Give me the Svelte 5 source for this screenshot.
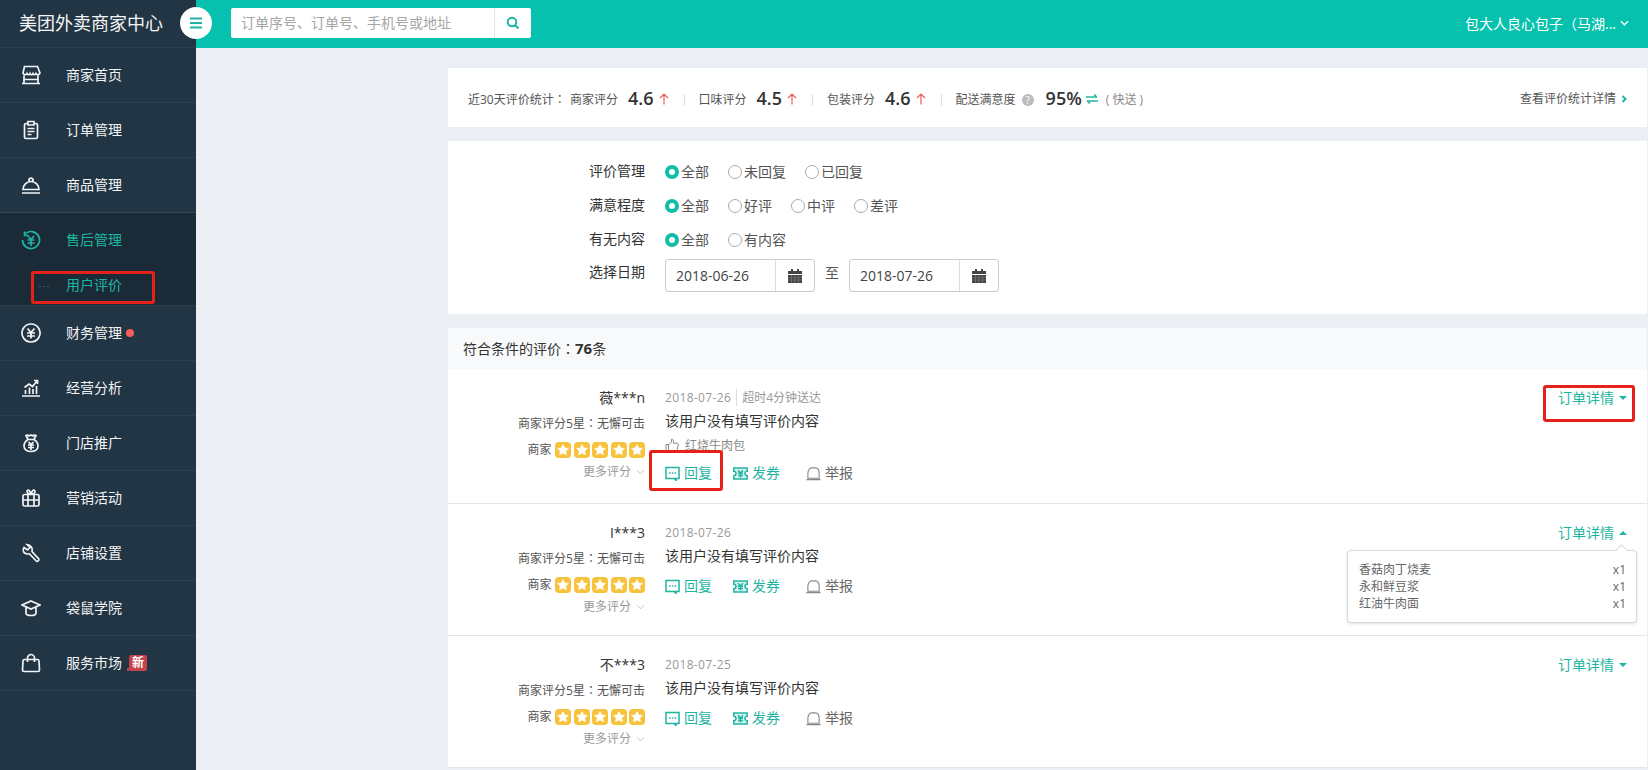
<script>
  const yen = 'M6.500 5.500L10 9.500L13.500 5.500M6 10h8M6 13h8M10 9.500V15.500';
  const nav = [
    { t: '商家首页', d: 'M3.500 1.500h13l2.500 6.500c-.6 2-3.300 2-4 .6c-.6 1.400-2.400 1.400-3 0c-.6 1.400-2.400 1.400-3 0c-.6 1.400-2.400 1.400-3 0c-.7 1.400-3.400 1.400-4-.6zM3 10.500V18M17 10.500V18M1 18.500h18M3 14.500h14' },
    { t: '订单管理', d: 'M7 3.500H5a1.500 1.500 0 0 0-1.500 1.500v12a1.500 1.500 0 0 0 1.500 1.500h10a1.500 1.500 0 0 0 1.500-1.500V5A1.500 1.500 0 0 0 15 3.500h-2M7 1.500h6v3.500H7zM6.500 8.500h7M6.500 11.500h7M6.500 14.500h4' },
    { t: '商品管理', d: 'M2 14.500a8 8 0 0 1 16 0zM8.500 6.500a2 2 0 1 1 3 0M1 18h18' },
    { t: '售后管理', active: true, sub: '用户评价', d: 'M3.500 1.500V5.500h4M4 4A8.500 8.500 0 1 1 1.500 10M7 6L10 9.500L13 6M6.500 10h7M6.500 13h7M10 9.500V16' },
    { t: '财务管理', dot: true, d: 'M10 1a9 9 0 1 0 .01 0zM' + yen.slice(1) },
    { t: '经营分析', d: 'M1 18h18M4.500 16v-4M8.500 16V9.500M12 16v-5M15.500 16V8M3.500 9.500L8 6l3.500 2.500L16 3M13 2.500h3.500V6' },
    { t: '门店推广', d: 'M7 6.500L5 2.500c1.500-1 2.500 0 3 .5c1-1.200 3-1.200 4 0c.5-.5 1.500-1.500 3-.5l-2 4c2.500 1.500 4 4 4 6.500c0 3.500-3 5.500-7 5.500s-7-2-7-5.500c0-2.500 1.500-5 4-6.500zM7 6.500h6M7.500 9L10 11.500L12.500 9M7 12h6M7 14.500h6M10 11.500V17' },
    { t: '营销活动', d: 'M3.500 6.500h13a1.500 1.500 0 0 1 1.500 1.500v8.500a1.500 1.500 0 0 1-1.500 1.500h-13A1.500 1.500 0 0 1 2 16.500V8a1.500 1.500 0 0 1 1.500-1.500zM2 12h16M7 6.500V18M13 6.500V18M10 6.500C8 6 5.500 5 6 3c.5-1.500 3-1.500 4 3.500c1-5 3.500-5 4-3.500c.5 2-2 3-4 3.500z' },
    { t: '店铺设置', d: 'M6 1.500L9 4.500L6.500 7L3 4.500C1 7 2.500 11 6.500 11c.8 0 1.200 0 1.800-.3l7 7.300c1 1 3.200-.5 2.500-2L11 8.500c1-3-1-7-5-7z' },
    { t: '袋鼠学院', d: 'M10 3L19 7L10 11L1 7zM5 9.500V15c0 1.500 2 2.500 5 2.500s5-1 5-2.500V9.500' },
    { t: '服务市场', badge: true, d: 'M3.500 6.500h13a1.500 1.500 0 0 1 1.500 1.500l.5 9a1.500 1.500 0 0 1-1.500 1.500H3A1.500 1.500 0 0 1 1.500 17L2 8a1.500 1.500 0 0 1 1.500-1.500zM6.500 9V5a3.500 3.500 0 0 1 7 0v4' }
  ];
  const stats = [
    { label: '商家评分', value: '4.6' },
    { label: '口味评分', value: '4.5' },
    { label: '包装评分', value: '4.6' }
  ];
  const filters = [
    { label: '评价管理', opts: ['全部', '未回复', '已回复'] },
    { label: '满意程度', opts: ['全部', '好评', '中评', '差评'] },
    { label: '有无内容', opts: ['全部', '有内容'] }
  ];
  const reviews = [
    { name: '薇***n', date: '2018-07-26', late: '超时4分钟送达', liked: '红烧牛肉包' },
    { name: 'I***3', date: '2018-07-26', open: true, items: ['香菇肉丁烧麦', '永和鲜豆浆', '红油牛肉面'] },
    { name: '不***3', date: '2018-07-25' }
  ];
</script>

<div class="page">
  <aside class="side">
    <div class="logo">美团外卖商家中心</div>
    {#each nav as n}
      <div class="nav" class:on={n.active}>
        <div class="nav-row">
          <svg class="nav-ico" viewBox="0 0 20 20" width="20" height="20"><path d={n.d} /></svg>
          <span class="nav-text">{n.t}</span>
          {#if n.dot}<i class="dot"></i>{/if}
          {#if n.badge}<span class="new">新</span>{/if}
        </div>
        {#if n.sub}
          <div class="sub"><span class="dash">---</span><span>{n.sub}</span></div>
        {/if}
      </div>
    {/each}
  </aside>

  <div class="right">
    <header class="top">
      <button class="burger" aria-label="menu">
        <svg viewBox="0 0 14 12" width="14" height="12"><path d="M1 1.500h12M1 6h12M1 10.500h12" /></svg>
      </button>
      <div class="search">
        <span class="ph">订单序号、订单号、手机号或地址</span>
        <span class="sbtn">
          <svg viewBox="0 0 14 14" width="14" height="14"><circle cx="6" cy="6" r="4.300" /><path d="M9.200 9.200L12.500 12.500" /></svg>
        </span>
      </div>
      <div class="user">
        <span>包大人良心包子<span class="cp">（</span>马湖...</span>
        <svg viewBox="0 0 10 6" width="9" height="6"><path d="M1 1l4 4l4-4" /></svg>
      </div>
    </header>

    <main class="main">
      <section class="stats">
        <span class="st-title">近30天评价统计<span class="cp">：</span></span>
        {#each stats as s}
          <span class="st-label">{s.label}</span>
          <b class="st-val">{s.value}</b>
          <svg class="up" viewBox="0 0 10 12" width="10" height="12"><path d="M5 11.500V1M1 5l4-4l4 4" /></svg>
          <i class="st-div"></i>
        {/each}
        <span class="st-label">配送满意度</span>
        <span class="help">?</span>
        <b class="st-val pct">95%</b>
        <svg class="swap" viewBox="0 0 12 10" width="12" height="10"><path d="M0 3h11M8 .5L11 3M12 7H1M4 9.500L1 7" /></svg>
        <span class="fast">( 快送 )</span>
        <span class="st-link">查看评价统计详情
          <svg viewBox="0 0 6 8" width="6" height="8"><path d="M1.500 1l3 3l-3 3" /></svg>
        </span>
      </section>

      <section class="filter">
        {#each filters as f}
          <div class="f-row">
            <span class="f-label">{f.label}</span>
            <div class="opts">
              {#each f.opts as o, i}
                <span class="opt"><i class="radio" class:sel={i === 0}></i>{o}</span>
              {/each}
            </div>
          </div>
        {/each}
        <div class="f-row date-row">
          <span class="f-label">选择日期</span>
          {#each ['2018-06-26', '2018-07-26'] as d, i}
            {#if i === 1}<span class="to">至</span>{/if}
            <div class="date">
              <span class="date-v">{d}</span>
              <span class="date-b">
                <svg viewBox="0 0 14 14" width="14" height="14"><path class="cal" d="M3 0h2v2h4V0h2v2h3v3H0V2h3zM0 6h14v8H0z" /><path class="cal-g" d="M0 8.500h14M0 11h14M3.500 6v8M7 6v8M10.500 6v8" /></svg>
              </span>
            </div>
          {/each}
        </div>
      </section>

      <section class="list">
        <div class="list-h">符合条件的评价<span class="cp">：</span><b>76</b>条</div>
        {#each reviews as r, idx}
          <article class="review" class:first={idx === 0}>
            <div class="r-left">
              <div class="r-name">{r.name}</div>
              <div class="r-sub">商家评分5星<span class="cp">：</span>无懈可击</div>
              <div class="r-stars">
                <span>商家</span>
                {#each [1, 2, 3, 4, 5] as _}
                  <span class="star"><svg viewBox="0 0 16 16" width="16" height="16"><path d="M8 2.500l1.700 3.400l3.800.5l-2.800 2.600l.7 3.700L8 11l-3.400 1.700l.7-3.700L2.500 6.400l3.800-.5z" /></svg></span>
                {/each}
              </div>
              <div class="r-more">更多评分<svg viewBox="0 0 10 6" width="9" height="6"><path d="M1 1l4 4l4-4" /></svg></div>
            </div>
            <div class="r-main">
              <div class="r-date">{r.date}{#if r.late}<span class="late">超时4分钟送达</span>{/if}</div>
              <div class="r-text">该用户没有填写评价内容</div>
              {#if r.liked}
                <div class="r-like">
                  <svg viewBox="0 0 14 14" width="14" height="14"><path d="M1 6.500h2.500V13H1zM3.500 7L6.500 4V1.200c1.500-.4 2.300 1 1.800 4h4c.8 0 1.200.7 1 1.500l-1.300 5.300c-.2.700-.6 1-1.300 1H3.500" /></svg>
                  {r.liked}
                </div>
              {/if}
              <div class="r-acts">
                <span class="act teal">
                  <svg viewBox="0 0 15 15" width="15" height="15"><path d="M1 1.500h13v11H1zM11 12.500v2l-2-2M4 7h1.500M6.800 7h1.500M9.600 7h1.500" /></svg>回复
                </span>
                <span class="act teal">
                  <svg viewBox="0 0 15 15" width="15" height="15"><path class="tk" d="M.8 2h13.400v3.300a2.200 2.200 0 0 0 0 4.400V13H.8V9.700a2.200 2.200 0 0 0 0-4.400z" /><path d="M5 4.200L7.500 7L10 4.200M5 7.300h5M5 9.500h5M7.500 7V11.500" /></svg>发券
                </span>
                <span class="act gray">
                  <svg viewBox="0 0 16 16" width="15" height="15"><path d="M2 13V8c0-3.500 2-6 4-6h4c2.500 0 4 2.500 4 6v5zM.5 14.500h15" /></svg>举报
                </span>
              </div>
            </div>
            <div class="r-detail" class:open={r.open}>订单详情<i class="caret"></i></div>
            {#if r.items}
              <div class="pop">
                {#each r.items as it}
                  <div class="pop-row"><span>{it}</span><span>x1</span></div>
                {/each}
              </div>
            {/if}
          </article>
        {/each}
      </section>
    </main>
  </div>

  <i class="mark m1"></i>
  <i class="mark m2"></i>
  <i class="mark m3"></i>
</div>

<style>
  :global(html), :global(body) { margin: 0; height: 100%; overflow: hidden; }
  .page {
    position: relative;
    display: flex;
    width: 1648px;
    height: 770px;
    overflow: hidden;
    background: #ebeef3;
    font: 14px/20px "Open Sans", "Noto Sans CJK SC", sans-serif;
    color: #333;
  }
  svg { display: block; flex: none; fill: none; stroke: currentColor; }
  .cp { font-family: "Noto Sans CJK TC", sans-serif; }

  .side { width: 196px; flex: none; background: #223544; color: #f2f4f5; }
  .logo {
    padding-left: 19px;
    font-size: 18px;
    line-height: 47px;
    height: 47px;
  }
  .nav { border-top: 1px solid #2c3f4e; }
  .nav.on { background: #1a2a37; color: #1fb5a2; border-top-color: #33485a; }
  .nav:last-child { border-bottom: 1px solid #2c3f4e; }
  .nav-row { display: flex; align-items: center; height: 54px; padding-left: 21px; }
  .nav-ico { stroke-width: 1.700; margin-right: 25px; }
  .dot { width: 8px; height: 8px; margin-left: 4px; border-radius: 50%; background: #f55d5f; }
  .new {
    position: relative;
    width: 18px;
    height: 16px;
    margin-left: 7px;
    border-radius: 2px;
    background: #c5444b;
    color: #fff;
    font-size: 12px;
    font-weight: 700;
    line-height: 16px;
    text-align: center;
  }
  .new::before {
    content: "";
    position: absolute;
    left: -2px;
    bottom: 0;
    border: 2px solid transparent;
    border-right-color: #c5444b;
    border-bottom-color: #c5444b;
    border-left: 0;
    border-top: 0;
    border-bottom-width: 3px;
  }
  .sub { display: flex; align-items: center; height: 38px; padding: 0 0 2px 38px; box-sizing: border-box; }
  .dash { width: 28px; color: #4a5a66; letter-spacing: 1px; font-size: 10px; }

  .right { flex: 1; min-width: 0; display: flex; flex-direction: column; }
  .top { position: relative; display: flex; align-items: center; height: 48px; flex: none; background: #06c1ae; }
  .burger {
    position: absolute;
    left: -16px;
    top: 7px;
    width: 32px;
    height: 32px;
    padding: 0;
    display: grid;
    place-items: center;
    border: 0;
    border-radius: 50%;
    background: #fff;
    color: #1fb5a2;
  }
  .burger svg { stroke-width: 2; }
  .search {
    display: flex;
    width: 300px;
    height: 30px;
    margin: -2px 0 0 35px;
    border-radius: 2px;
    background: #fff;
  }
  .ph { flex: 1; padding-left: 10px; color: #a5a5a5; line-height: 30px; }
  .sbtn { width: 36px; display: grid; place-items: center; border-left: 1px solid #e5e5e5; color: #1fb5a2; }
  .sbtn svg { stroke-width: 2; }
  .user { display: flex; align-items: center; gap: 4px; margin: -2px 19px 0 auto; color: #fff; }
  .user svg { stroke-width: 1.500; }

  .main { flex: 1; padding: 20px 1px 0 252px; }
  .stats {
    display: flex;
    align-items: center;
    height: 59px;
    box-sizing: border-box;
    padding: 4px 20px 0 20px;
    background: #fff;
    font-size: 12px;
    color: #555;
  }
  .st-title { width: 102px; }
  .st-val { margin: -3px 0 0 10px; font-size: 18px; font-weight: 600; color: #333; }
  .up { margin-left: 5px; margin-top: -2px; color: #ee5a5f; stroke-width: 1.200; }
  .st-div { width: 1px; height: 12px; margin: 0 14px 0 15px; background: #ddd; }
  .help {
    width: 12px;
    height: 12px;
    margin-left: 6px;
    border-radius: 50%;
    background: #bbb;
    color: #fff;
    font-size: 10px;
    line-height: 12px;
    text-align: center;
  }
  .pct { margin-left: 12px; }
  .swap { margin-left: 4px; margin-top: -2px; color: #1fb5a2; stroke-width: 1.500; }
  .fast { margin-left: 8px; color: #888; white-space: nowrap; }
  .st-link { margin: -2px 0 0 auto; display: flex; align-items: center; gap: 5px; }
  .st-link svg { color: #1fb5a2; stroke-width: 2; }

  .filter { height: 173px; margin-top: 14px; padding: 14px 0 0 141px; box-sizing: border-box; background: #fff; }
  .f-row { display: flex; align-items: center; height: 34px; }
  .f-label { width: 76px; margin-top: -2px; }
  .opts { display: flex; }
  .opt { display: flex; align-items: center; gap: 2px; margin-right: 19px; color: #555; }
  .radio { width: 12px; height: 12px; border: 1px solid #aaa; border-radius: 50%; }
  .radio.sel { width: 6px; height: 6px; border: 4px solid #10bda8; }
  .date-row { align-items: flex-start; height: 33px; margin-top: 2px; }
  .date-row .f-label { margin-top: 3px; }
  .date {
    display: flex;
    width: 150px;
    height: 33px;
    box-sizing: border-box;
    border: 1px solid #ccc;
    border-radius: 3px;
  }
  .date-v { flex: 1; padding-left: 10px; line-height: 32px; color: #444; }
  .date-b { width: 38px; display: grid; place-items: center; border-left: 1px solid #ddd; }
  .cal { fill: #444; stroke: none; }
  .cal-g { stroke: #888; stroke-width: .5; }
  .to { width: 34px; margin-top: 4px; padding-left: 10px; box-sizing: border-box; color: #555; }

  .list { margin-top: 14px; background: #fff; }
  .list-h { height: 41px; padding-left: 15px; background: #f8f9fa; line-height: 41px; }
  .list-h b { font-size: 15px; }
  .review {
    position: relative;
    display: flex;
    height: 132px;
    box-sizing: border-box;
    border-bottom: 1px solid #e4e4e4;
  }
  .review.first { height: 135px; }
  .r-left { width: 197px; flex: none; padding-top: 19px; text-align: right; font-size: 12px; color: #555; }
  .r-name { font-size: 14px; color: #333; }
  .r-sub { margin-top: 5px; line-height: 19px; }
  .r-stars { display: flex; align-items: center; justify-content: flex-end; gap: 2.500px; margin-top: 7px; }
  .r-stars span:first-child { margin-right: 1px; }
  .star { width: 16px; height: 16px; border-radius: 4px; background: #f8c33c; }
  .star path { fill: #fff; stroke: #fff; stroke-width: .6; stroke-linejoin: round; }
  .r-more { display: flex; align-items: center; justify-content: flex-end; gap: 5px; margin-top: 2px; color: #999; }
  .r-more svg { color: #bbb; stroke-width: 1; }
  .r-main { margin-left: 20px; padding-top: 19px; }
  .r-date { font-size: 12px; color: #999; letter-spacing: .35px; }
  .late { margin-left: 5px; padding-left: 5px; border-left: 1px solid #ddd; letter-spacing: 0; }
  .r-text { margin-top: 3px; color: #333; }
  .r-like { display: flex; align-items: center; gap: 6px; margin-top: 5px; font-size: 12px; color: #888; }
  .r-like svg { stroke-width: 1; margin-bottom: 2px; }
  .r-acts { display: flex; gap: 19px; margin-top: 10px; }
  .first .r-acts { margin-top: 7px; }
  .act { display: flex; align-items: center; gap: 4px; margin-right: 2px; }
  .act svg { stroke-width: 1.500; }
  .teal { color: #1fb5a2; }
  .gray { color: #666; margin-left: 5px; }
  .gray svg { color: #888; stroke-width: 1.200; }
  .tk { fill: #d8f3ef; }
  .r-detail {
    position: absolute;
    right: 20px;
    top: 19px;
    display: flex;
    align-items: center;
    gap: 5px;
    color: #1fb5a2;
  }
  .caret { width: 0; height: 0; border: 4.500px solid transparent; border-top-color: #1fb5a2; border-bottom: 0; }
  .open .caret { border-top: 0; border-bottom: 4.500px solid #1fb5a2; }
  .pop {
    position: absolute;
    right: 10px;
    top: 46px;
    width: 290px;
    height: 73px;
    box-sizing: border-box;
    padding: 10px 10px 0 11px;
    background: #fff;
    border: 1px solid #d8d8d8;
    border-radius: 4px;
    box-shadow: 0 1px 3px rgba(0, 0, 0, .12);
    font-size: 12px;
    line-height: 17px;
    color: #666;
  }
  .pop::before {
    content: "";
    position: absolute;
    right: 10px;
    top: -5px;
    width: 8px;
    height: 8px;
    background: #fff;
    border-left: 1px solid #d8d8d8;
    border-top: 1px solid #d8d8d8;
    transform: rotate(45deg);
  }
  .pop-row { display: flex; justify-content: space-between; }

  .mark { position: absolute; box-sizing: border-box; border: 3px solid #e6211a; border-radius: 3px; }
  .m1 { left: 31px; top: 271px; width: 124px; height: 33px; }
  .m2 { left: 649px; top: 450px; width: 74px; height: 41px; }
  .m3 { left: 1543px; top: 385px; width: 92px; height: 37px; }
</style>
